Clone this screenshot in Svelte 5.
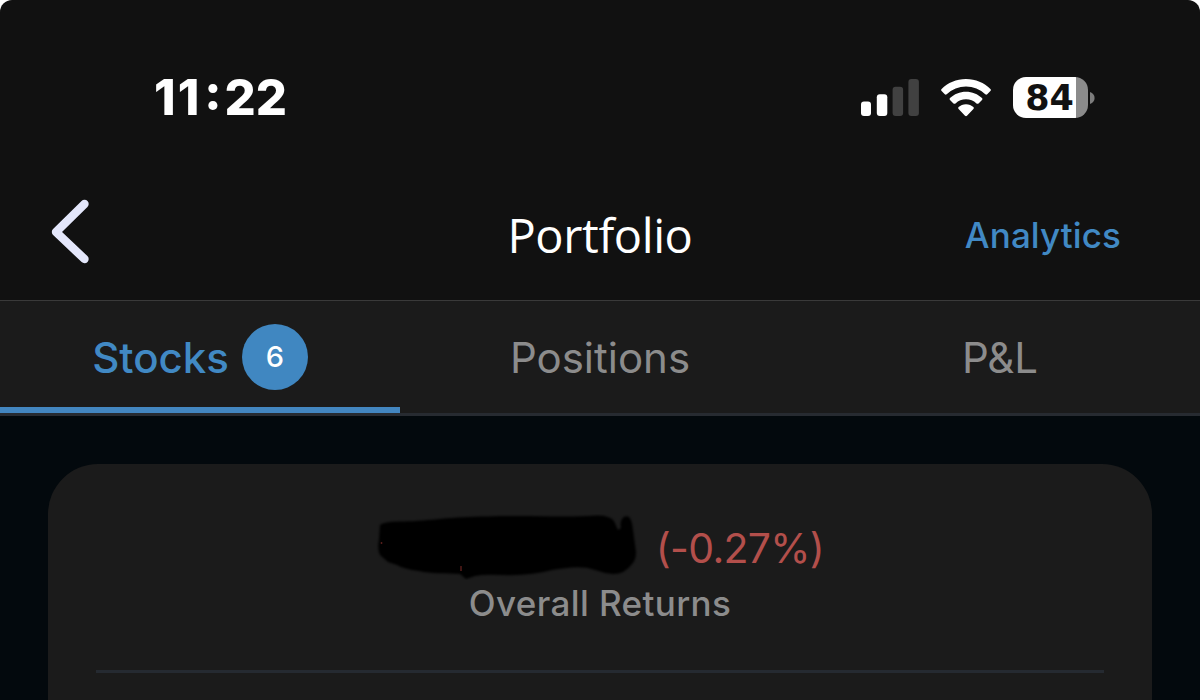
<script lang="ts">
    const tabs = [
        { id: "stocks", label: "Stocks", count: 6 },
        { id: "positions", label: "Positions", count: 0 },
        { id: "pnl", label: "P&L", count: 0 },
    ];

    let activeTab = $state("stocks");
</script>

<div class="screen">
    <div class="status-bar">
        <div class="time">
            <span class="hours">11</span><span class="colon">:</span><span>22</span>
        </div>
        <div class="indicators">
            <svg class="signal" width="58" height="38" viewBox="0 0 58 38">
                <rect x="0" y="22.5" width="10" height="14.5" rx="3" fill="#fff" />
                <rect x="15.8" y="15.3" width="10.5" height="21.7" rx="3" fill="#fff" />
                <rect x="31.6" y="7.8" width="10.5" height="29.2" rx="3" fill="#414141" />
                <rect x="47.4" y="0" width="10.5" height="37" rx="3" fill="#414141" />
            </svg>
            <svg class="wifi" width="50" height="38" viewBox="0 0 50 38" fill="#fff">
                <path d="M25 0C34.6 0 43.2 3.8 49.4 10Q50.4 11 49.4 12L46.2 15.2Q45.3 16.1 44.3 15.2A28 28 0 0 0 5.7 15.2Q4.7 16.1 3.8 15.2L.6 12Q-.4 11 .6 10C6.8 3.8 15.4 0 25 0Z" />
                <path d="M25 12.7C31.2 12.7 36.8 15.1 41 19Q42 20 41 21L37.5 24.4Q36.5 25.3 35.5 24.4A15.6 15.6 0 0 0 14.5 24.4Q13.5 25.3 12.5 24.4L9 21Q8 20 9 19C13.2 15.1 18.8 12.7 25 12.7Z" />
                <path d="M25 25.2C27.9 25.2 30.5 26.3 32.4 28Q33.4 29 32.4 30L26 36.7Q25 37.6 24 36.7L17.6 30Q16.6 29 17.6 28C19.5 26.3 22.1 25.2 25 25.2Z" />
            </svg>
            <div class="battery">
                <div class="battery-body">
                    <span class="battery-level">84</span>
                </div>
                <svg width="5" height="14" viewBox="0 0 5 14">
                    <path d="M0 1Q4.6 2.8 4.6 7T0 13Z" fill="#7d7d7d" />
                </svg>
            </div>
        </div>
    </div>

    <header class="nav">
        <button class="back" type="button" aria-label="Back">
            <svg width="40" height="66" viewBox="0 0 40 66">
                <path
                    d="M34.5 5L6 33L34.5 60"
                    fill="none"
                    stroke="#e4e7fb"
                    stroke-width="8.4"
                    stroke-linecap="round"
                    stroke-linejoin="round"
                />
            </svg>
        </button>
        <h1 class="title">Portfolio</h1>
        <button class="link" type="button">Analytics</button>
    </header>

    <div class="tabs">
        {#each tabs as tab (tab.id)}
            <button
                class="tab"
                class:active={activeTab === tab.id}
                type="button"
                onclick={() => (activeTab = tab.id)}
            >
                <span class="tab-label">{tab.label}</span>
                {#if tab.count}
                    <span class="count">{tab.count}</span>
                {/if}
            </button>
        {/each}
    </div>

    <main class="content">
        <section class="card">
            <div class="returns">
                <svg class="redacted" width="262" height="66" viewBox="0 0 262 66">
                    <path
                        d="M4 11Q8 7 28 7.5C55 7 75 2.5 112 2.5C150 1 190 4 220 1.5Q233 1 238 7L242 16L245 14C243 5 249 0 253 3Q256 6 257 16L260 38Q260 46 256 50Q249 60 237 60Q227 59 219 56C205 51 190 54 176 56Q155 62 125 61Q108 60 99 62L90 65L84 60C70 59 55 60 43 57Q28 55 21 51L12 48L4 41Q1 34 3 26Z"
                    />
                    <path class="speck" d="M5.5 28v2M85 52v5" />
                </svg>
                <span class="percent">(-0.27%)</span>
            </div>
            <div class="caption">Overall Returns</div>
            <hr />
        </section>
    </main>
</div>

<style>
    :global(body) {
        background: #fff;
    }

    .screen {
        display: flex;
        flex-direction: column;
        width: 1200px;
        height: 700px;
        overflow: hidden;
        border-radius: 12px 12px 0 0;
        background: #111;
        color: #fff;
        font-family: Inter, "Liberation Sans", sans-serif;
    }

    button {
        padding: 0;
        border: 0;
        background: none;
        color: inherit;
        font: inherit;
        cursor: pointer;
    }

    svg {
        display: block;
        flex: none;
    }

    .status-bar {
        display: flex;
        align-items: center;
        justify-content: space-between;
        box-sizing: border-box;
        height: 195px;
        padding: 0 105px 0 154px;
    }

    .time {
        display: flex;
        font-size: 49px;
        font-weight: 800;
        line-height: 60px;
    }

    .hours {
        letter-spacing: 2px;
    }

    .colon {
        margin: -5px 3px 5px;
    }

    .indicators {
        display: flex;
        align-items: center;
    }

    .wifi {
        margin: 0 22px 0 22px;
    }

    .battery {
        display: flex;
        align-items: center;
        gap: 2px;
    }

    .battery-body {
        display: flex;
        align-items: center;
        justify-content: center;
        box-sizing: border-box;
        width: 75px;
        height: 41px;
        padding: 1px 2px 0 0;
        border-radius: 13px;
        background: linear-gradient(to right, #fff 63px, #8b8b8b 63px);
    }

    .battery-level {
        color: #111;
        font-family: "DejaVu Sans", sans-serif;
        font-size: 35px;
        font-weight: 700;
        line-height: 41px;
    }

    .nav {
        display: grid;
        grid-template-columns: 1fr auto 1fr;
        align-items: center;
        height: 80px;
        padding: 0 79px 25px;
        border-bottom: 1px solid #3a3a3a;
    }

    .back {
        justify-self: start;
        margin-left: -29px;
        padding-bottom: 7px;
    }

    .title {
        margin: 0;
        font-family: "Open Sans", "Noto Sans", sans-serif;
        font-size: 47px;
        font-weight: 400;
        letter-spacing: -0.4px;
        line-height: 60px;
    }

    .link {
        justify-self: end;
        color: #4189c4;
        font-size: 35px;
        font-weight: 500;
        letter-spacing: 0.1px;
        line-height: 44px;
    }

    .tabs {
        display: grid;
        grid-template-columns: repeat(3, 1fr);
        height: 112px;
        border-bottom: 3px solid #272b31;
        background: #1b1b1b;
    }

    .tab {
        display: flex;
        align-items: center;
        justify-content: center;
        gap: 13px;
        color: #8c8c8c;
        font-size: 42px;
        line-height: 52px;
    }

    .tab-label {
        padding-top: 2px;
    }

    .tab.active {
        color: #4189c4;
        font-weight: 500;
        box-shadow: inset 0 -6px #4386c0;
    }

    .count {
        width: 66px;
        height: 66px;
        margin-bottom: 1px;
        border-radius: 50%;
        background: #4087c1;
        color: #fff;
        font-size: 29px;
        font-weight: 500;
        line-height: 66px;
        text-align: center;
    }

    .content {
        flex: 1;
        padding: 48px 48px 0;
        background: #03090d;
    }

    .card {
        box-sizing: border-box;
        height: 236px;
        padding: 50px 48px 0;
        border-radius: 50px 50px 0 0;
        background: #1b1b1b;
    }

    .returns {
        display: flex;
        align-items: center;
        justify-content: center;
        gap: 18px;
        height: 66px;
    }

    .redacted path {
        fill: #000;
        filter: blur(0.8px);
    }

    .redacted .speck {
        filter: none;
        stroke: #551d1a;
        stroke-width: 1.5;
    }

    .percent {
        padding-top: 2px;
        color: #b34f4b;
        font-size: 41px;
        letter-spacing: -0.7px;
        line-height: 50px;
    }

    .caption {
        color: #8c8c8c;
        font-size: 35px;
        font-weight: 500;
        letter-spacing: 0.4px;
        line-height: 46px;
        text-align: center;
    }

    hr {
        height: 3px;
        margin: 44px 0 0;
        border: 0;
        background: #252a31;
    }
</style>
